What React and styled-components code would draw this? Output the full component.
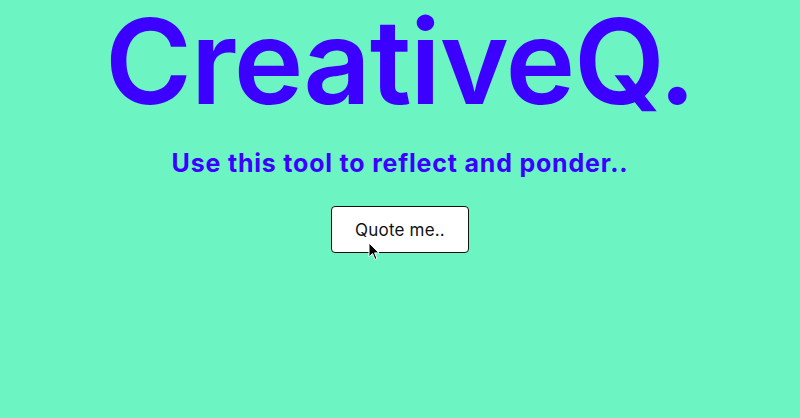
import styled, { createGlobalStyle } from 'styled-components';

const GlobalStyle = createGlobalStyle`
  html, body {
    margin: 0;
    padding: 0;
    background: #6cf5c2;
  }
  body {
    font-family: 'Inter', 'Liberation Sans', sans-serif;
  }
`;

export default function App() {
  return (
    <>
      <GlobalStyle />
      <Page>
        <Title>CreativeQ.</Title>
        <Subtitle>Use this tool to reflect and ponder..</Subtitle>
        <ButtonWrap>
          <QuoteButton>Quote me..</QuoteButton>
          <Cursor viewBox="0 0 12 19" width="12" height="19">
            <path d="M1 1 L1 15 L4.5 11.5 L7 17.5 L9 16.6 L6.6 10.9 L11 10.9 Z" fill="#000" stroke="#fff" strokeWidth="1" strokeLinejoin="round" />
          </Cursor>
        </ButtonWrap>
      </Page>
    </>
  );
}

const Page = styled.div`
  width: 800px;
  height: 418px;
  display: flex;
  flex-direction: column;
  align-items: center;
  background: #6cf5c2;
  overflow: hidden;
`;

const Title = styled.h1`
  margin: 0;
  font-family: 'Inter', sans-serif;
  font-weight: 600;
  font-size: 118px;
  line-height: 122px;
  letter-spacing: -1.3px;
  color: #3b00ff;
`;

const Subtitle = styled.h2`
  margin: 0;
  margin-top: 23px;
  font-family: 'Inter', sans-serif;
  font-weight: 700;
  font-size: 25px;
  line-height: 36px;
  letter-spacing: 0.8px;
  color: #3b00ff;
`;

const ButtonWrap = styled.div`
  position: relative;
  margin-top: 25px;
`;

const QuoteButton = styled.button`
  width: 138px;
  height: 47px;
  background: #fff;
  border: 1px solid #111;
  border-radius: 4px;
  font-family: 'Inter', sans-serif;
  font-size: 17px;
  letter-spacing: 0.2px;
  color: #111;
  cursor: pointer;
`;

const Cursor = styled.svg`
  position: absolute;
  left: 37px;
  top: 36px;
  pointer-events: none;
`;
